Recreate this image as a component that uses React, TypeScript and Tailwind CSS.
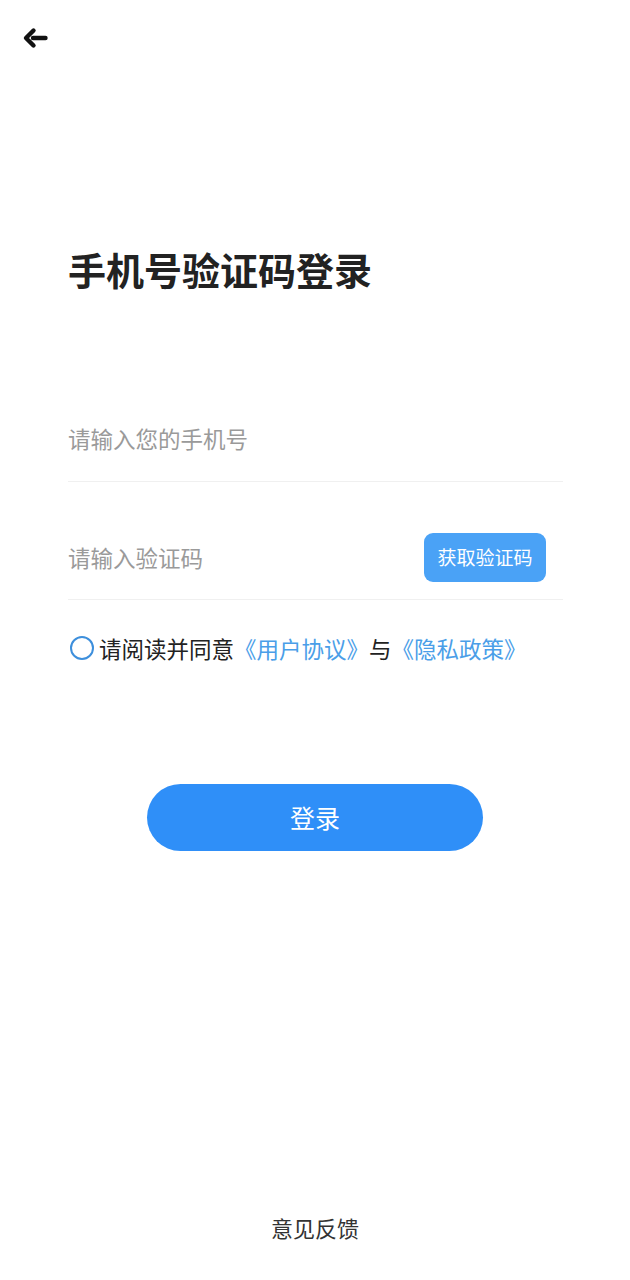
import { useState } from 'react';

const font = { fontFamily: '"Noto Sans CJK SC", "Noto Sans", sans-serif' };

const App = () => {
  const [agreed, setAgreed] = useState(false);

  return (
    <div className="w-[630px] h-[1280px] bg-white flex flex-col relative" style={font}>
      {/* Back */}
      <div className="h-[76px] pl-[22px] pt-[27px]">
        <svg width="28" height="22" viewBox="0 0 28 22" fill="none">
          <path d="M11.5 3.5 L4 11 L11.5 18.5" stroke="#111" strokeWidth="4.4" strokeLinecap="round" strokeLinejoin="round" />
          <path d="M11 11 H23.5" stroke="#111" strokeWidth="4.4" strokeLinecap="round" />
        </svg>
      </div>

      {/* Title */}
      <h1 className="mt-[165px] pl-[68px] text-[38px] leading-[56px] font-bold text-[#222]">手机号验证码登录</h1>

      {/* Form */}
      <div className="mt-[104px] mx-[68px] w-[495px]">
        <div className="h-[81px] flex items-center border-b border-[#f0f0f0] pb-[4px]">
          <input
            className="w-full text-[22.5px] outline-none placeholder-[#9a9a9a] bg-transparent"
            placeholder="请输入您的手机号"
          />
        </div>
        <div className="flex items-center justify-between border-b border-[#f0f0f0] pt-[51px] pb-[17px]">
          <input
            className="flex-1 text-[22.5px] outline-none placeholder-[#9a9a9a] bg-transparent"
            placeholder="请输入验证码"
          />
          <button className="w-[122px] h-[49px] mr-[17px] rounded-[9px] bg-[#4aa2f6] text-white text-[19px]">
            获取验证码
          </button>
        </div>

        <div className="mt-[33px] flex items-center text-[22.5px] leading-[30px]">
          <button
            onClick={() => setAgreed(!agreed)}
            className={`w-[24px] h-[24px] ml-[2px] mr-[5px] rounded-full border-2 border-[#3d8fdc] ${agreed ? 'bg-[#3d8fdc]' : ''}`}
          />
          <span className="text-[#222]">请阅读并同意</span>
          <span className="text-[#4a9ee8]">《用户协议》</span>
          <span className="text-[#222]">与</span>
          <span className="text-[#4a9ee8]">《隐私政策》</span>
        </div>
      </div>

      {/* Login */}
      <div className="mt-[121px] flex justify-center">
        <button className="w-[336px] h-[67px] rounded-full bg-[#2f8ff8] text-white text-[25px]">登录</button>
      </div>

      <div className="mt-auto pb-[36px] text-center text-[22px] text-[#333]">意见反馈</div>
    </div>
  );
};

export default App;
